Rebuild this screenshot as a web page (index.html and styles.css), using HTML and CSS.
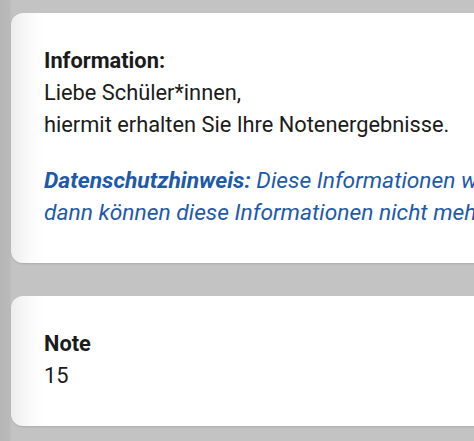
FILE: index.html
```html
<!DOCTYPE html>
<html lang="de">
<head>
    <meta charset="UTF-8">
    <meta name="viewport" content="width=device-width, initial-scale=1.0">
    <title>Notenergebnisse</title>
    <link rel="stylesheet" href="styles.css">
</head>
<body>
    <div class="page">
        <!-- Information -->
        <div class="card">
            <p class="info">
                <strong>Information:</strong><br>
                Liebe Schüler*innen,<br>
                hiermit erhalten Sie Ihre Notenergebnisse.
            </p>
            <p class="privacy">
                <strong>Datenschutzhinweis:</strong> Diese Informationen werden nur einmalig angezeigt.<br>
                dann können diese Informationen nicht mehr aufgerufen werden.
            </p>
        </div>

        <!-- Note -->
        <div class="card">
            <div class="label">Note</div>
            <div class="value">15</div>
        </div>
    </div>
</body>
</html>
```

FILE: styles.css
```css
/* Grundlayout */
html, body { margin: 0; padding: 0; overflow: hidden; }
body { font-family: Roboto, "Liberation Sans", sans-serif; font-size: 21.8px; line-height: 32px; color: #1b1b1b; background: linear-gradient(to right, #b6b6b6 0, #b9b9b9 9px, #c3c3c3 12px, #c3c3c3 100%); height: 441px; }
.page { display: flex; flex-direction: column; gap: 33px; padding: 13px 0 0 11px; width: 900px; }
.card { background: linear-gradient(to right, #ededed 0, #fafafa 18px, #fff 34px); border-radius: 12px; padding: 32px 33px 34px; box-shadow: 0 1px 2px rgba(0,0,0,0.12); white-space: nowrap; }
.card p { margin: 0; }
.info strong { font-weight: 700; }
.privacy { margin-top: 24px !important; color: #1e5aa8; font-style: italic; font-size: 22.8px; }
.privacy strong { font-weight: 700; }
.label { font-weight: 700; }
```
